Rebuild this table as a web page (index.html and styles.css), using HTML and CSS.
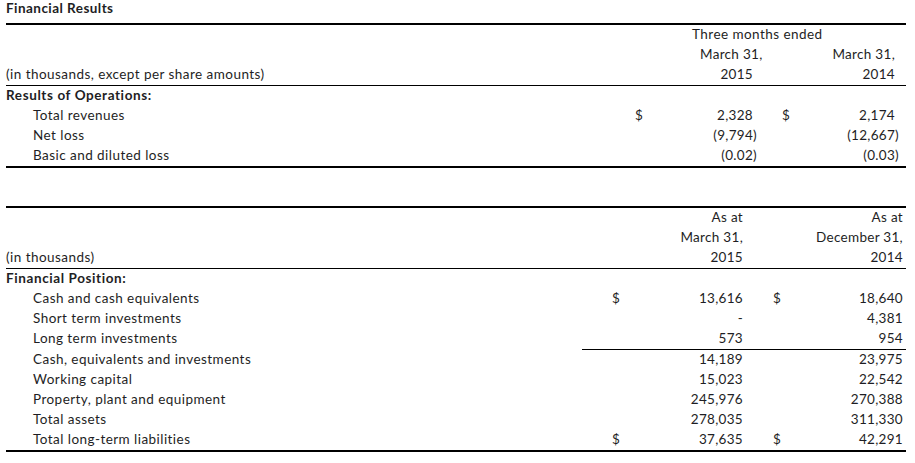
FILE: index.html
```html
<!DOCTYPE html>
<html>
<head>
<meta charset="utf-8">
<link rel="stylesheet" href="styles.css">
</head>
<body>
<div class="page">
  <div class="title">Financial Results</div>
  <table class="fin t1">
    <colgroup>
      <col class="c-lbl"><col class="c-d1"><col class="c-v1"><col class="c-d2"><col class="c-v2">
    </colgroup>
    <thead>
      <tr><td></td><td></td><td colspan="2" class="ctr">Three months ended</td><td></td></tr>
      <tr><td></td><td></td><td class="num">March 31,</td><td></td><td class="num">March 31,</td></tr>
      <tr class="hrule"><td class="lbl">(in thousands, except per share amounts)</td><td></td><td class="num">2015</td><td></td><td class="num">2014</td></tr>
    </thead>
    <tbody>
      <tr><td class="lbl sec">Results of Operations:</td><td></td><td></td><td></td><td></td></tr>
      <tr><td class="lbl ind">Total revenues</td><td class="dol">$</td><td class="num">2,328</td><td class="dol">$</td><td class="num">2,174</td></tr>
      <tr><td class="lbl ind">Net loss</td><td></td><td class="num"><span class="neg">(9,794)</span></td><td></td><td class="num"><span class="neg">(12,667)</span></td></tr>
      <tr><td class="lbl ind">Basic and diluted loss</td><td></td><td class="num"><span class="neg">(0.02)</span></td><td></td><td class="num"><span class="neg">(0.03)</span></td></tr>
    </tbody>
  </table>

  <table class="fin t2">
    <colgroup>
      <col class="c-lbl"><col class="c-d1"><col class="c-v1"><col class="c-d2"><col class="c-v2">
    </colgroup>
    <thead>
      <tr><td></td><td></td><td class="num">As at</td><td></td><td class="num">As at</td></tr>
      <tr><td></td><td></td><td class="num">March 31,</td><td></td><td class="num">December 31,</td></tr>
      <tr class="hrule"><td class="lbl">(in thousands)</td><td></td><td class="num">2015</td><td></td><td class="num">2014</td></tr>
    </thead>
    <tbody>
      <tr><td class="lbl sec">Financial Position:</td><td></td><td></td><td></td><td></td></tr>
      <tr><td class="lbl ind">Cash and cash equivalents</td><td class="dol">$</td><td class="num">13,616</td><td class="dol">$</td><td class="num">18,640</td></tr>
      <tr><td class="lbl ind">Short term investments</td><td></td><td class="num">-</td><td></td><td class="num">4,381</td></tr>
      <tr class="subrule"><td class="lbl ind">Long term investments</td><td></td><td class="num">573</td><td></td><td class="num">954</td></tr>
      <tr><td class="lbl ind">Cash, equivalents and investments</td><td></td><td class="num">14,189</td><td></td><td class="num">23,975</td></tr>
      <tr><td class="lbl ind">Working capital</td><td></td><td class="num">15,023</td><td></td><td class="num">22,542</td></tr>
      <tr><td class="lbl ind">Property, plant and equipment</td><td></td><td class="num">245,976</td><td></td><td class="num">270,388</td></tr>
      <tr><td class="lbl ind">Total assets</td><td></td><td class="num">278,035</td><td></td><td class="num">311,330</td></tr>
      <tr><td class="lbl ind">Total long-term liabilities</td><td class="dol">$</td><td class="num">37,635</td><td class="dol">$</td><td class="num">42,291</td></tr>
    </tbody>
  </table>
</div>
</body>
</html>
```

FILE: styles.css
```css
html, body {
  margin: 0;
  padding: 0;
  background: #ffffff;
}
body {
  font-family: Lato, "Liberation Sans", sans-serif;
  font-size: 13.5px;
  letter-spacing: 0.45px;
  color: #1e1e24;
}
.page {
  padding: 0 0 0 6px;
  width: 900px;
}
.title {
  font-weight: bold;
  height: 23px;
  line-height: 16px;
  letter-spacing: 0.45px;
}
.fin {
  width: 900px;
  table-layout: fixed;
  border-collapse: separate;
  border-spacing: 0;
  border-top: 2px solid #000;
  border-bottom: 2px solid #000;
}
.t2 {
  margin-top: 38px;
}
.fin td {
  height: 20px;
  line-height: 19px;
  padding: 0;
  white-space: nowrap;
  vertical-align: top;
}
.hrule td {
  border-bottom: 1px solid #000;
}
.t2 .subrule td + td {
  border-bottom: 1px solid #000;
}
.sec {
  font-weight: bold;
  letter-spacing: 0.6px;
}
.ind {
  padding-left: 27px !important;
}
.num {
  text-align: right;
  letter-spacing: 0.3px;
}
.ctr {
  text-align: left;
  text-indent: -8px;
}
.neg {
  margin-right: -4px;
}

/* table 1 columns */
.t1 .c-lbl { width: 628px; }
.t1 .c-d1 { width: 66px; }
.t1 .c-v1 { width: 58px; }
.t1 .c-d2 { width: 56px; }
.t1 .c-v2 { width: 92px; }
.t1 tr > td:nth-child(2) { padding-left: 1px; }
.t1 tr > td:nth-child(3) { padding-right: 5px; }
.t1 tr > td:nth-child(4) { padding-left: 24px; }
.t1 tr > td:nth-child(5) { padding-right: 11px; }
.t1 tr > td.ctr { padding-right: 0; }

/* table 2 columns */
.t2 .c-lbl { width: 576px; }
.t2 .c-d1 { width: 78px; }
.t2 .c-v1 { width: 88px; }
.t2 .c-d2 { width: 42px; }
.t2 .c-v2 { width: 116px; }
.t2 tr > td:nth-child(2) { padding-left: 30px; }
.t2 tr > td:nth-child(3) { padding-right: 5px; }
.t2 tr > td:nth-child(4) { padding-left: 25px; }
.t2 tr > td:nth-child(5) { padding-right: 3px; }
```
